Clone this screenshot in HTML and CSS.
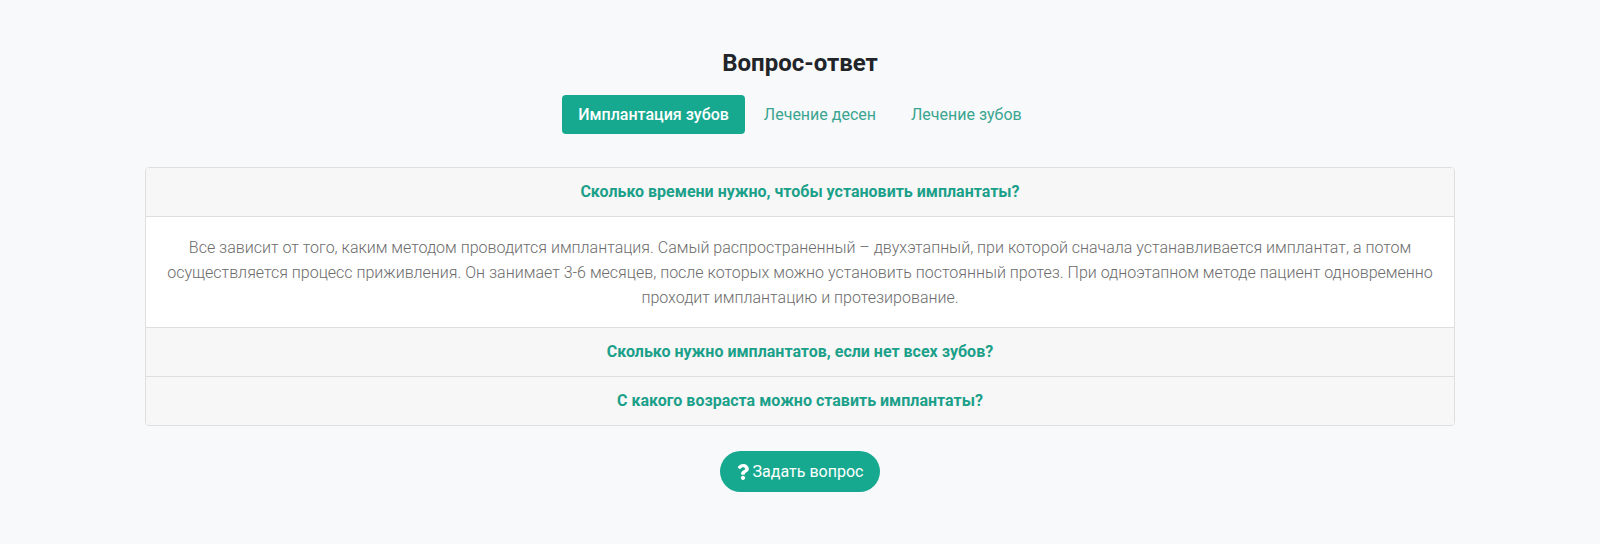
FILE: index.html
```html
<!DOCTYPE html>
<html lang="ru">
<head>
  <meta charset="UTF-8">
  <title>Вопрос-ответ</title>
  <link rel="stylesheet" href="styles.css">
</head>
<body>

<section class="faq">
  <h2 class="faq-title">Вопрос-ответ</h2>

  <nav class="faq-tabs">
    <a href="#" class="tab active">Имплантация зубов</a>
    <a href="#" class="tab">Лечение десен</a>
    <a href="#" class="tab">Лечение зубов</a>
  </nav>

  <div class="accordion">
    <div class="acc-item">
      <div class="acc-head">Сколько времени нужно, чтобы установить имплантаты?</div>
      <div class="acc-body">
        Все зависит от того, каким методом проводится имплантация. Самый распространенный – двухэтапный, при которой сначала устанавливается имплантат, а потом осуществляется процесс приживления. Он занимает 3-6 месяцев, после которых можно установить постоянный протез. При одноэтапном методе пациент одновременно проходит имплантацию и протезирование.
      </div>
    </div>
    <div class="acc-item">
      <div class="acc-head">Сколько нужно имплантатов, если нет всех зубов?</div>
    </div>
    <div class="acc-item">
      <div class="acc-head">С какого возраста можно ставить имплантаты?</div>
    </div>
  </div>

  <div class="faq-actions">
    <a href="#" class="ask-btn">
      <svg class="ask-icon" viewBox="0 0 384 512"><path d="M202 0C122 0 70.5 32.7 29.9 91c-7.4 10.6-5.1 25.1 5.2 32.9l43.1 32.7c10.4 7.9 25.1 6 33.3-4.1 25-31.4 43.6-49.4 82.8-49.4 30.8 0 68.8 19.8 68.8 49.6 0 22.6-18.6 34.1-49 51.2-35.4 19.9-82.3 44.6-82.3 106.4V320c0 13.3 10.7 24 24 24h72.5c13.3 0 24-10.7 24-24v-5.800c0-42.9 125.3-44.6 125.3-160.6C377.5 66.3 286.9 0 202 0zM192 373.5c-38.2 0-69.3 31.1-69.3 69.3 0 38.2 31.1 69.3 69.3 69.3s69.3-31.1 69.3-69.3-31.1-69.3-69.3-69.3z"/></svg>
      Задать вопрос
    </a>
  </div>
</section>

</body>
</html>
```

FILE: styles.css
```css
body {
  margin: 0;
  font-family: Roboto, "Liberation Sans", sans-serif;
  background: #f8f9fa;
  color: #212529;
}
.faq {
  width: 1310px;
  margin: 0 auto;
  padding: 49px 0 50px;
}
.faq-title {
  margin: 0 0 17px;
  text-align: center;
  font-size: 24px;
  line-height: 29px;
  font-weight: 700;
  color: #212529;
}
.faq-tabs {
  display: flex;
  justify-content: center;
  gap: 3px;
  margin-bottom: 33px;
}
.tab {
  display: block;
  padding: 0 16px;
  height: 39px;
  line-height: 39px;
  font-size: 16px;
  color: #3aa591;
  text-decoration: none;
  border-radius: 4px;
}
.tab.active {
  background: #17a98f;
  color: #fff;
  font-weight: 500;
}
.accordion {
  background: #fff;
  border: 1px solid #dfdfdf;
  border-radius: 4px;
  overflow: hidden;
}
.acc-item + .acc-item {
  border-top: 1px solid #dfdfdf;
}
.acc-head {
  height: 48px;
  line-height: 48px;
  text-align: center;
  background: #f7f7f7;
  color: #1ba08a;
  font-weight: 700;
  font-size: 16px;
}
.acc-body {
  border-top: 1px solid #dfdfdf;
  padding: 18px 20px 17px;
  text-align: center;
  font-size: 16px;
  line-height: 25px;
  font-weight: 300;
  color: #6c6c6c;
}
.faq-actions {
  display: flex;
  justify-content: center;
  margin-top: 25px;
}
.ask-btn {
  display: flex;
  align-items: center;
  gap: 4px;
  height: 41px;
  padding: 0 17px;
  border-radius: 21px;
  background: #17a98f;
  color: #fff;
  font-size: 16px;
  text-decoration: none;
}
.ask-icon {
  width: 12px;
  height: 16px;
  fill: #fff;
}
```
